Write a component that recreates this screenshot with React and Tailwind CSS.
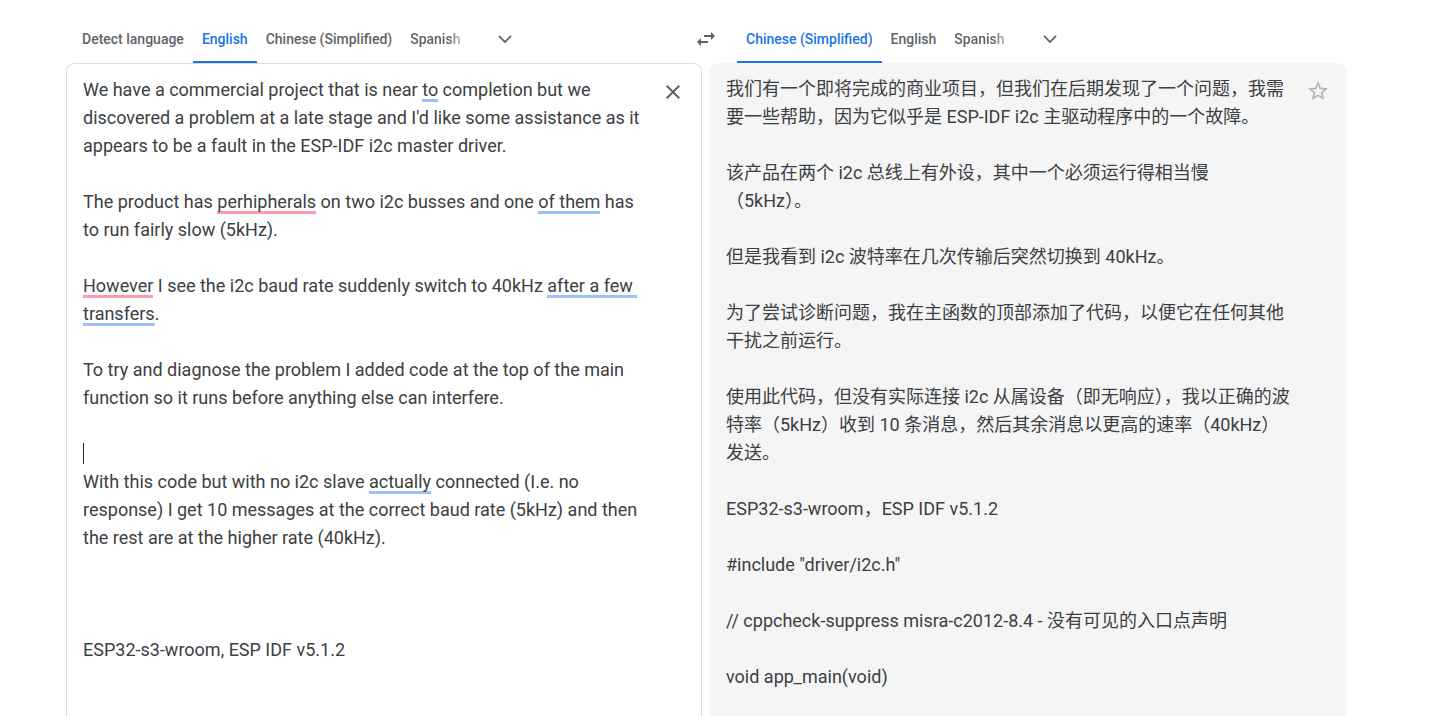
import React, { useState } from "react";

const SOURCE = [
  { text: "We have a commercial project that is near " },
  { text: "to", mark: "hint" },
  {
    text: " completion but we discovered a problem at a late stage and I'd like some assistance as it appears to be a fault in the ESP-IDF i2c master driver.\n\nThe product has ",
  },
  { text: "perhipherals", mark: "error" },
  { text: " on two i2c busses and one " },
  { text: "of them", mark: "hint" },
  { text: " has to run fairly slow (5kHz).\n\n" },
  { text: "However", mark: "error" },
  { text: " I see the i2c baud rate suddenly switch to 40kHz " },
  { text: "after a few transfers", mark: "hint" },
  {
    text: ".\n\nTo try and diagnose the problem I added code at the top of the main function so it runs before anything else can interfere.\n\n",
  },
  { caret: true, text: "" },
  { text: "\nWith this code but with no i2c slave " },
  { text: "actually", mark: "hint" },
  {
    text: " connected (I.e. no response) I get 10 messages at the correct baud rate (5kHz) and then the rest are at the higher rate (40kHz).\n\n\n\nESP32-s3-wroom, ESP IDF v5.1.2",
  },
];

const SOURCE_TEXT = SOURCE.map((s) => s.text).join("");

const TRANSLATION = `我们有一个即将完成的商业项目，但我们在后期发现了一个问题，我需要一些帮助，因为它似乎是 ESP-IDF i2c 主驱动程序中的一个故障。

该产品在两个 i2c 总线上有外设，其中一个必须运行得相当慢（5kHz）。

但是我看到 i2c 波特率在几次传输后突然切换到 40kHz。

为了尝试诊断问题，我在主函数的顶部添加了代码，以便它在任何其他干扰之前运行。

使用此代码，但没有实际连接 i2c 从属设备（即无响应），我以正确的波特率（5kHz）收到 10 条消息，然后其余消息以更高的速率（40kHz）发送。

ESP32-s3-wroom，ESP IDF v5.1.2

#include "driver/i2c.h"

// cppcheck-suppress misra-c2012-8.4 - 没有可见的入口点声明

void app_main(void)`;

const MARK = {
  hint: "bg-[linear-gradient(#9dbffa,#9dbffa)]",
  error: "bg-[linear-gradient(#fc9bad,#fc9bad)]",
};

function Icon({ d, className }) {
  return (
    <svg viewBox="0 0 24 24" fill="currentColor" className={className} aria-hidden="true">
      <path d={d} />
    </svg>
  );
}

function LanguageTabs({ label, languages, initial }) {
  const [active, setActive] = useState(initial);
  return (
    <div className="flex min-w-0 flex-1 px-[7px]">
      <div role="tablist" aria-label={label} className="flex">
        {languages.map((name, i) => (
          <button
            key={name}
            type="button"
            role="tab"
            aria-selected={name === active}
            onClick={() => setActive(name)}
            className={`h-12 border-b-2 px-[9px] pt-0.5 text-sm font-medium whitespace-nowrap ${
              name === active ? "border-[#1a73e8] text-[#1a73e8]" : "border-transparent text-[#5f6368]"
            } ${
              i === languages.length - 1 ? "[mask-image:linear-gradient(to_right,black_70%,transparent)]" : ""
            }`}
          >
            {name}
          </button>
        ))}
      </div>
      <button
        type="button"
        aria-label="More languages"
        className="ml-4 flex h-12 w-10 items-center justify-center text-[#5f6368]"
      >
        <Icon className="size-5" d="M5.41 7.59L4 9l8 8 8-8-1.41-1.41L12 14.17z" />
      </button>
    </div>
  );
}

function MarkedText() {
  return SOURCE.map((s, i) => {
    if (s.caret) {
      return <span key={i} className="inline-block h-[21px] w-px bg-[#202124] align-text-bottom" />;
    }
    return (
      <span
        key={i}
        className={
          s.mark ? `${MARK[s.mark]} box-decoration-clone bg-[length:100%_3px] bg-bottom bg-no-repeat pb-0.5` : ""
        }
      >
        {s.text}
      </span>
    );
  });
}

// The text box takes the input; its glyphs are drawn by the layer behind it,
// where single words can carry an underline.
function SourceEditor() {
  const [value, setValue] = useState(SOURCE_TEXT);
  return (
    <div className="grid min-w-0 flex-1 pt-3 pl-4 text-lg/7">
      <div
        aria-hidden="true"
        className="col-start-1 row-start-1 break-words whitespace-pre-wrap text-[#3c4043]"
      >
        {value === SOURCE_TEXT ? <MarkedText /> : value}
      </div>
      <textarea
        aria-label="Source text"
        spellCheck={false}
        value={value}
        onChange={(e) => setValue(e.target.value)}
        className="relative col-start-1 row-start-1 resize-none overflow-hidden bg-transparent text-transparent caret-[#202124] outline-none"
      />
    </div>
  );
}

export default function App() {
  return (
    <div className="flex min-h-screen flex-col bg-white pt-[15px] pr-[98px] pl-[66px] font-['Roboto','Noto_Sans_CJK_SC',sans-serif]">
      <header className="flex">
        <LanguageTabs
          label="Source language"
          languages={["Detect language", "English", "Chinese (Simplified)", "Spanish"]}
          initial="English"
        />
        <button
          type="button"
          aria-label="Swap languages"
          className="flex size-12 items-center justify-center text-[#5f6368]"
        >
          <Icon
            className="size-6"
            d="M6.99 11L3 15l3.99 4v-3H14v-2H6.99v-3zM21 9l-3.99-4v3H10v2h7.01v3L21 9z"
          />
        </button>
        <LanguageTabs
          label="Target language"
          languages={["Chinese (Simplified)", "English", "Spanish"]}
          initial="Chinese (Simplified)"
        />
      </header>

      <main className="grid flex-1 grid-cols-2 gap-2">
        <section className="flex items-start gap-1 rounded-t-lg border border-b-0 border-[#dadce0]">
          <SourceEditor />
          <button
            type="button"
            aria-label="Clear source text"
            className="mt-1 mr-1 flex size-12 items-center justify-center text-[#5f6368]"
          >
            <Icon
              className="size-6"
              d="M19 6.41L17.59 5 12 10.59 6.41 5 5 6.41 10.59 12 5 17.59 6.41 19 12 13.41 17.59 19 19 17.59 13.41 12z"
            />
          </button>
        </section>

        <section className="flex items-start gap-1 rounded-t-lg bg-[#f5f5f5]">
          <p
            lang="zh-CN"
            className="min-w-0 flex-1 pt-3 pl-4 text-lg/7 break-words whitespace-pre-wrap text-[#3c4043]"
          >
            {TRANSLATION}
          </p>
          <button
            type="button"
            aria-label="Save translation"
            className="mt-1 mr-1 flex size-12 items-center justify-center text-[#b0b2b4]"
          >
            <Icon
              className="size-6"
              d="M22 9.24l-7.19-.62L12 2 9.19 8.63 2 9.24l5.46 4.73L5.82 21 12 17.27 18.18 21l-1.63-7.03L22 9.24zM12 15.4l-3.76 2.27 1-4.28-3.32-2.88 4.38-.38L12 6.1l1.71 4.04 4.38.38-3.32 2.88 1 4.28L12 15.4z"
            />
          </button>
        </section>
      </main>
    </div>
  );
}
